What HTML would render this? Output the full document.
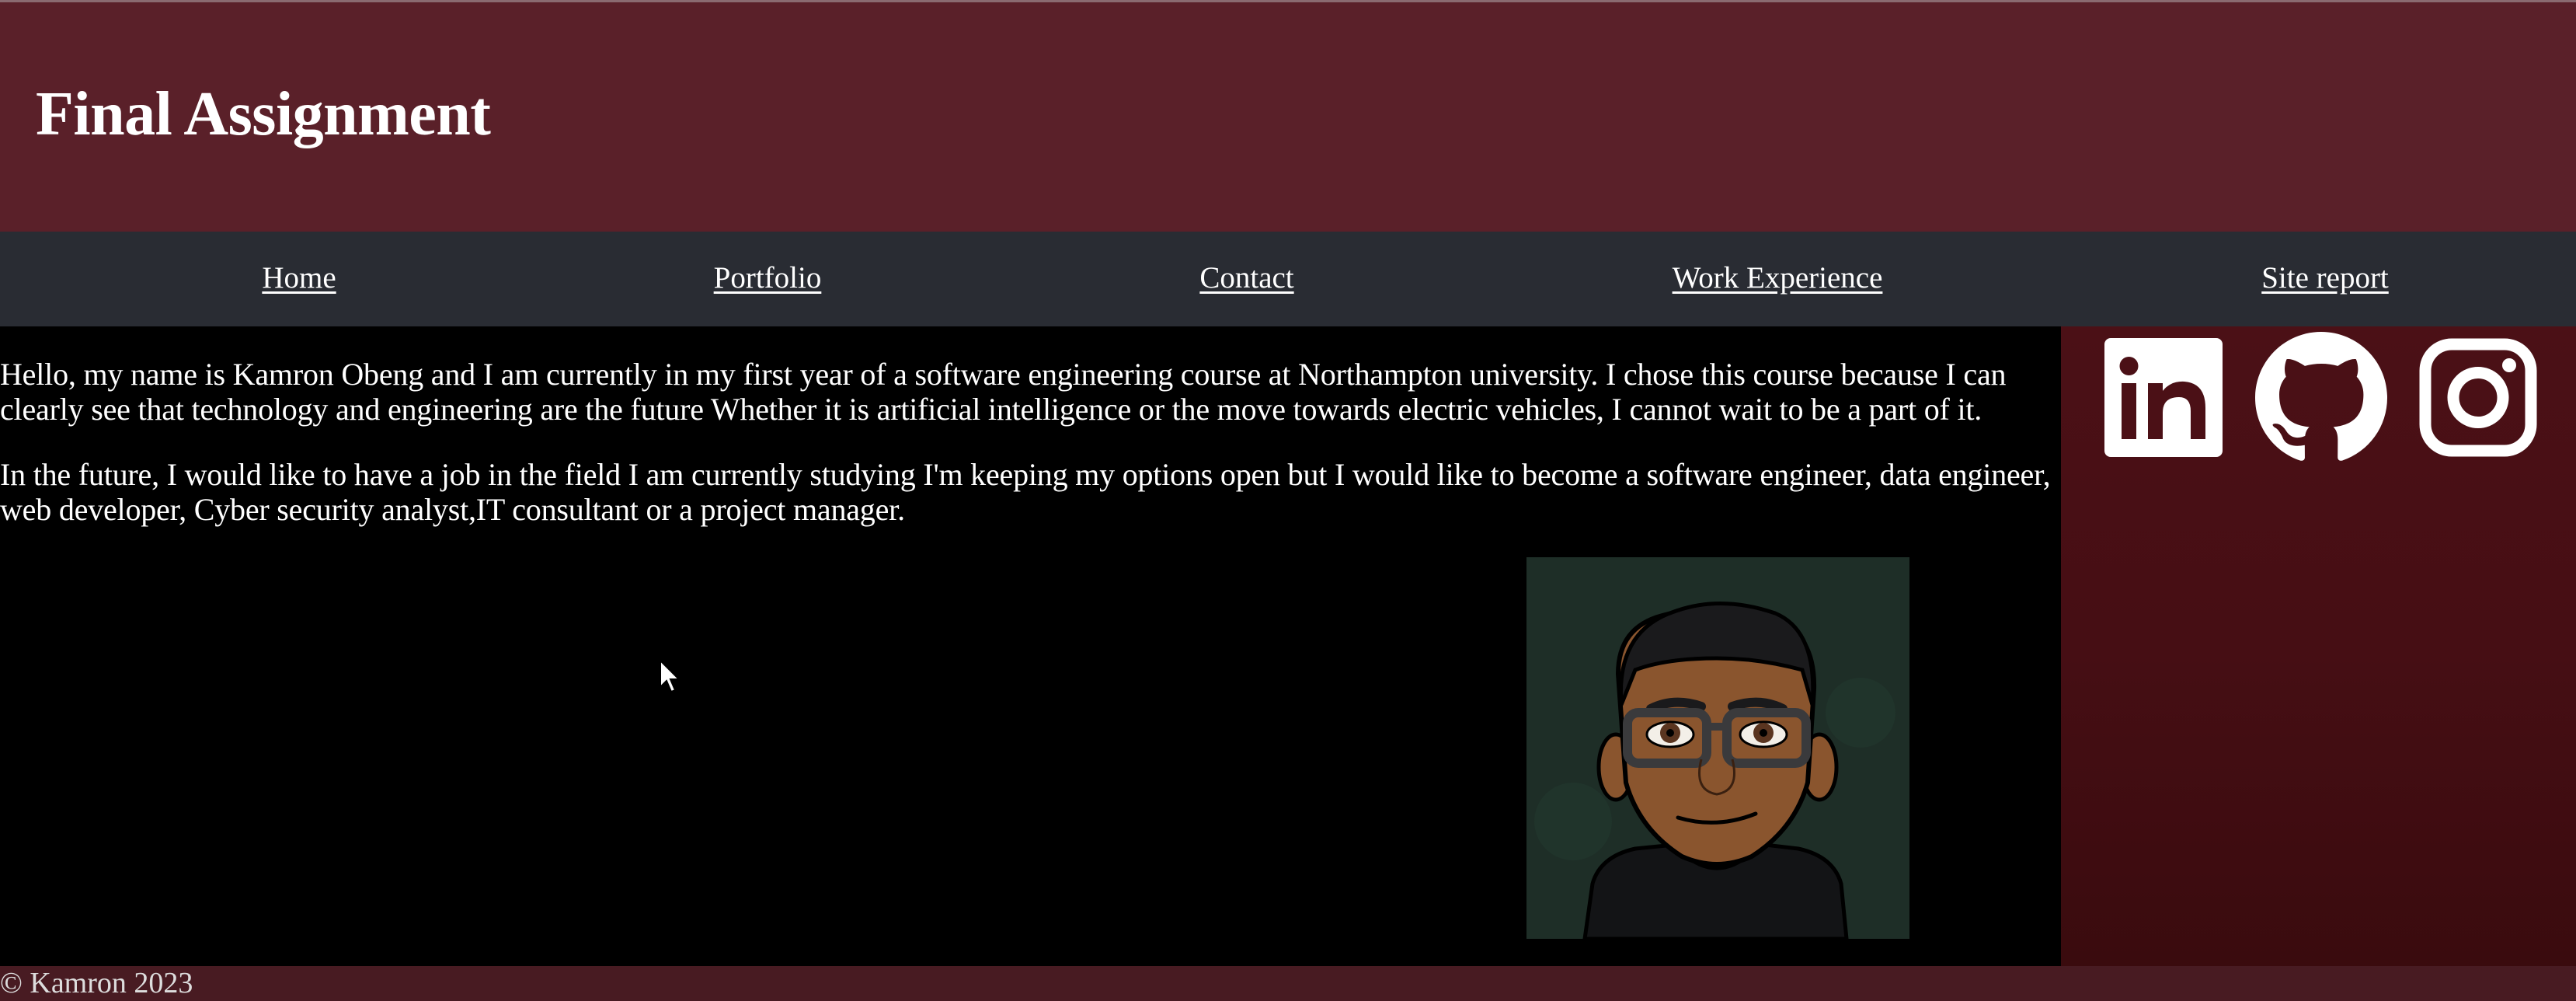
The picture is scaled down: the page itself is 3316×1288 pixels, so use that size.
<!DOCTYPE html>
<html><head><meta charset="utf-8">
<style>
*{margin:0;padding:0;box-sizing:border-box}
html,body{width:3316px;height:1288px;overflow:hidden;background:#000;font-family:"Liberation Serif","Times New Roman",serif;color:#fff}
#hdr{position:absolute;left:0;top:0;width:3316px;height:298px;background:#5a2029;border-top:3px solid #8a6a70}
#hdr h1{position:absolute;left:46px;top:104px;font-size:80px;font-weight:bold;line-height:1;letter-spacing:-0.5px}
#nav{position:absolute;left:0;top:298px;width:3316px;height:122px;background:#292c33}
#nav a{position:absolute;top:38px;font-size:39px;line-height:44px;color:#fff;text-decoration:underline;text-underline-offset:5px;transform:translateX(-50%);white-space:nowrap}
#main{position:absolute;left:0;top:420px;width:2654px;height:823px;background:#000}
.ln{position:absolute;left:0;font-size:40px;line-height:44px;white-space:nowrap;letter-spacing:-0.2px}
#side{position:absolute;left:2653px;top:420px;width:663px;height:823px;background:linear-gradient(#4b1016,#460e14 50%,#3a0b0e)}
#foot{position:absolute;left:0;top:1243px;width:3316px;height:45px;background:#481b22}
#foot span{position:absolute;left:0;top:2px;font-size:38px;line-height:40px;color:#ddd}
</style></head><body>
<div id="hdr"><h1>Final Assignment</h1></div>
<div id="nav">
<a style="left:385px">Home</a>
<a style="left:988px">Portfolio</a>
<a style="left:1605px">Contact</a>
<a style="left:2288px">Work Experience</a>
<a style="left:2993px">Site report</a>
</div>
<div id="main">
<div class="ln" style="top:40px">Hello, my name is Kamron Obeng and I am currently in my first year of a software engineering course at Northampton university. I chose this course because I can</div>
<div class="ln" style="top:85px">clearly see that technology and engineering are the future Whether it is artificial intelligence or the move towards electric vehicles, I cannot wait to be a part of it.</div>
<div class="ln" style="top:169px">In the future, I would like to have a job in the field I am currently studying I'm keeping my options open but I would like to become a software engineer, data engineer,</div>
<div class="ln" style="top:214px">web developer, Cyber security analyst,IT consultant or a project manager.</div>
<svg style="position:absolute;left:1965px;top:297px" width="493" height="491" viewBox="0 0 493 491">
<rect width="493" height="491" fill="#1e2e27"/>
<circle cx="60" cy="340" r="50" fill="#223a30" opacity=".5"/><circle cx="430" cy="200" r="45" fill="#223a30" opacity=".5"/>
<path d="M75 491 L85 420 Q95 385 140 375 L210 368 L290 368 L350 375 Q395 385 405 420 L412 491 Z" fill="#131416" stroke="#000" stroke-width="5"/>
<path d="M200 330 L200 380 Q245 420 290 380 L290 330Z" fill="#8a552e" stroke="#000" stroke-width="5"/>
<ellipse cx="115" cy="270" rx="22" ry="42" fill="#8a552e" stroke="#000" stroke-width="5"/>
<ellipse cx="377" cy="270" rx="22" ry="42" fill="#8a552e" stroke="#000" stroke-width="5"/>
<path d="M118 150 Q118 90 175 75 Q246 55 320 80 Q372 100 370 170 L362 290 Q345 350 290 385 Q245 405 200 385 Q145 350 128 290 Z" fill="#8a552e" stroke="#000" stroke-width="6"/>
<path d="M122 190 Q115 95 190 70 Q250 48 320 72 Q375 95 368 190 L355 145 Q300 130 245 130 Q180 130 140 145 Z" fill="#1a1a1c" stroke="#000" stroke-width="5"/>
<path d="M160 195 Q190 180 225 192 M265 192 Q300 180 330 195" stroke="#1a1a1c" stroke-width="12" fill="none" stroke-linecap="round"/>
<rect x="130" y="200" width="102" height="65" rx="14" fill="none" stroke="#3a3a3c" stroke-width="12"/>
<rect x="258" y="200" width="102" height="65" rx="14" fill="none" stroke="#3a3a3c" stroke-width="12"/>
<path d="M232 218 L258 218" stroke="#3a3a3c" stroke-width="10"/>
<ellipse cx="185" cy="228" rx="30" ry="16" fill="#f3efe8" stroke="#000" stroke-width="3"/>
<ellipse cx="305" cy="228" rx="30" ry="16" fill="#f3efe8" stroke="#000" stroke-width="3"/>
<circle cx="185" cy="226" r="13" fill="#5a3520"/><circle cx="305" cy="226" r="13" fill="#5a3520"/>
<circle cx="185" cy="226" r="5" fill="#000"/><circle cx="305" cy="226" r="5" fill="#000"/>
<path d="M225 260 Q215 300 245 305 Q275 300 265 260" fill="none" stroke="#3a2010" stroke-width="3"/>
<path d="M195 335 Q245 350 295 330" fill="none" stroke="#000" stroke-width="5" stroke-linecap="round"/>
</svg>
<svg style="position:absolute;left:848px;top:428px" width="30" height="44" viewBox="0 0 30 44"><path d="M2 2 L2 36 L10 28 L16 42 L21 40 L15 26 L26 26 Z" fill="#fff" stroke="#000" stroke-width="2"/></svg>
</div>
<div id="side">
<svg style="position:absolute;left:56px;top:15px" width="152" height="153" viewBox="0 0 152 153">
<rect x="0" y="0" width="152" height="153" rx="8" fill="#fff"/>
<rect x="22" y="58" width="19" height="72" fill="#4b1016"/>
<circle cx="31.5" cy="36" r="12" fill="#4b1016"/>
<path d="M56 58 L75 58 L75 68 Q85 55 103 56 Q130 58 130 90 L130 130 L111 130 L111 94 Q111 76 96 76 Q75 76 75 96 L75 130 L56 130 Z" fill="#4b1016"/>
</svg>
<svg style="position:absolute;left:250px;top:7px" width="170" height="170" viewBox="0 0 16 16">
<path fill="#fff" d="M8 0C3.58 0 0 3.580 0 8c0 3.54 2.29 6.53 5.470 7.59.4.07.55-.17.55-.38 0-.19-.01-.82-.01-1.49-2.01.37-2.53-.49-2.69-.94-.09-.23-.48-.94-.82-1.13-.28-.15-.68-.52-.01-.53.63-.01 1.08.58 1.23.82.72 1.21 1.87.87 2.33.66.07-.52.28-.87.51-1.07-1.78-.2-3.64-.89-3.64-3.95 0-.87.31-1.590.82-2.15-.08-.2-.36-1.02.08-2.12 0 0 .67-.21 2.2.82.64-.18 1.32-.27 2-.27.68 0 1.36.09 2 .27 1.53-1.04 2.2-.82 2.2-.82.44 1.1.16 1.92.08 2.12.51.56.82 1.27.82 2.15 0 3.07-1.87 3.75-3.65 3.95.29.25.54.73.54 1.48 0 1.07-.01 1.93-.01 2.2 0 .21.15.46.55.38A8.013 8.013 0 0016 8c0-4.42-3.58-8-8-8z"/>
</svg>
<svg style="position:absolute;left:461px;top:15px" width="152" height="153" viewBox="0 0 152 153">
<rect x="8" y="8" width="136" height="137" rx="34" fill="none" stroke="#fff" stroke-width="15"/>
<circle cx="76" cy="76.5" r="32" fill="none" stroke="#fff" stroke-width="15"/>
<circle cx="116" cy="35" r="9" fill="#fff"/>
</svg>
</div>
<div id="foot"><span>© Kamron 2023</span></div>
</body></html>
